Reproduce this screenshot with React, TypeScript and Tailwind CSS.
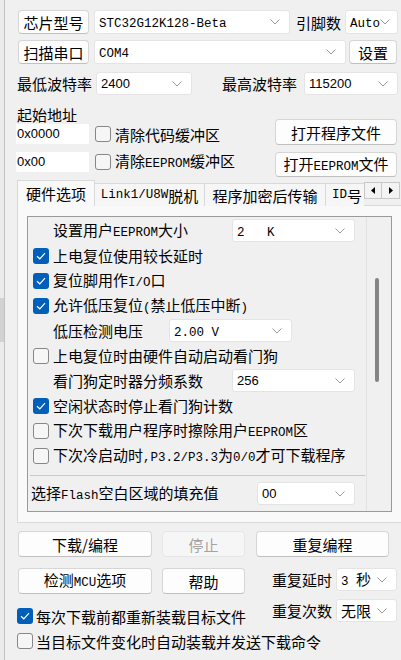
import React from 'react';

const Mix = ({ s }: { s: string }) => (
  <>
    {s.split(/([ -~]+)/).map((p, i) =>
      i % 2 === 1 ? (
        <span key={i} className="font-['Liberation_Mono',monospace] text-[12.5px] whitespace-pre">
          {p}
        </span>
      ) : (
        p
      )
    )}
  </>
);

const Chevron = () => (
  <svg width="10" height="6" viewBox="0 0 10 6" className="shrink-0">
    <path d="M0.5 0.5L5 5L9.5 0.5" fill="none" stroke="#9a9a9a" strokeWidth="1" />
  </svg>
);

const Combo = ({ value, className = '', sans = false }: { value: string; className?: string; sans?: boolean }) => (
  <div
    className={`flex items-center justify-between bg-white border border-[#e4e4e4] rounded-[3px] pl-[4px] pr-[9px] shrink-0 whitespace-nowrap ${className}`}
  >
    {sans ? (
      <span className="font-['Liberation_Sans',sans-serif] text-[13px] leading-none">{value}</span>
    ) : (
      <span className="leading-none whitespace-pre">
        <Mix s={value} />
      </span>
    )}
    <Chevron />
  </div>
);

const Btn = ({ children, className = '', disabled = false }: { children: React.ReactNode; className?: string; disabled?: boolean }) => (
  <div
    className={`flex items-center justify-center rounded-[4px] border shrink-0 leading-none whitespace-nowrap ${
      disabled
        ? 'bg-[#f6f6f6] border-[#e6e6e6] text-[#a3a3a3]'
        : 'bg-[#fdfdfd] border-[#d6d6d6] border-b-[#c0c0c0] text-black'
    } ${className}`}
  >
    {children}
  </div>
);

const Check = ({ checked }: { checked: boolean }) =>
  checked ? (
    <div className="w-4 h-4 rounded-[3px] bg-[#005fb8] flex items-center justify-center shrink-0">
      <svg width="10" height="8" viewBox="0 0 10 8">
        <path d="M1 4.2L3.8 6.8L9 1.2" fill="none" stroke="white" strokeWidth="1.2" />
      </svg>
    </div>
  ) : (
    <div className="w-4 h-4 rounded-[3px] border border-[#878787] bg-[#f6f6f6] shrink-0" />
  );

const CheckRow = ({ checked, text }: { checked: boolean; text: string }) => (
  <div className="flex items-center h-[25px] pl-[5px]">
    <Check checked={checked} />
    <span className="ml-[4px] leading-none whitespace-nowrap">
      <Mix s={text} />
    </span>
  </div>
);

export default function App() {
  return (
    <div className="w-[401px] h-[660px] bg-[#f0f0f0] flex overflow-hidden font-['Noto_Sans_CJK_SC','Noto_Sans',sans-serif] text-[15px] text-black">
      <div className="w-[4px] bg-[#ebebeb] flex flex-col">
        <div className="mt-[298px] h-[44px] bg-[#d2d2d2]" />
      </div>
      <div className="w-px bg-[#c2c2c2]" />
      <div className="flex-1 flex flex-col pl-[12px]">
        {/* row 1 */}
        <div className="flex items-center mt-[10px] h-6">
          <Btn className="ml-px w-[71px] h-6">芯片型号</Btn>
          <Combo value="STC32G12K128-Beta" className="ml-[5px] w-[196px] h-6" />
          <span className="ml-[6px] w-[44px] leading-none whitespace-nowrap">引脚数</span>
          <Combo value="Auto" className="ml-[5px] w-[53px] h-6 pl-[3px] pr-[4px]" />
        </div>
        {/* row 2 */}
        <div className="flex items-center mt-[6px] h-6">
          <Btn className="ml-px w-[71px] h-6">扫描串口</Btn>
          <Combo value="COM4" className="ml-[5px] w-[252px] h-6" />
          <Btn className="ml-[3px] w-[48px] h-6">设置</Btn>
        </div>
        {/* row 3 */}
        <div className="flex items-center mt-[8px] h-[23px]">
          <span className="w-[79px] leading-none whitespace-nowrap">最低波特率</span>
          <Combo value="2400" sans className="w-[96px] h-[23px]" />
          <span className="ml-[30px] w-[82px] leading-none whitespace-nowrap">最高波特率</span>
          <Combo value="115200" sans className="w-[94px] h-[23px]" />
        </div>
        {/* address + file buttons */}
        <div className="flex">
          <div className="flex flex-col mt-[11px]">
            <div className="h-[18px] leading-[18px]">起始地址</div>
            <div className="flex items-center h-[20px]">
              <div className="-ml-px w-[73px] h-[20px] bg-white flex items-center pl-px font-['Liberation_Sans',sans-serif] text-[13px]">
                0x0000
              </div>
              <div className="ml-[6px]">
                <Check checked={false} />
              </div>
              <span className="ml-[4px] leading-none whitespace-nowrap">清除代码缓冲区</span>
            </div>
            <div className="flex items-center h-[20px] mt-[8px]">
              <div className="-ml-px w-[73px] h-[20px] bg-white flex items-center pl-px font-['Liberation_Sans',sans-serif] text-[13px]">
                0x00
              </div>
              <div className="ml-[6px]">
                <Check checked={false} />
              </div>
              <span className="ml-[4px] leading-none whitespace-nowrap">
                <Mix s="清除EEPROM缓冲区" />
              </span>
            </div>
          </div>
          <div className="ml-auto mr-[4px] flex flex-col mt-[24px] gap-[7px]">
            <Btn className="w-[122px] h-[26px]">打开程序文件</Btn>
            <Btn className="w-[122px] h-[25px]">
              <span>
                打开<Mix s="EEPROM" />文件
              </span>
            </Btn>
          </div>
        </div>
        {/* tabs */}
        <div className="flex items-end mt-[3px] h-[26px] relative z-10 whitespace-nowrap">
          <div className="w-[78px] h-[26px] border border-b-0 border-[#d9d9d9] bg-[#f9f9f9] flex items-center justify-center leading-none">
            硬件选项
          </div>
          <div className="w-[110px] h-[23px] border-t border-r border-[#d9d9d9] bg-[#f6f6f6] flex items-center justify-center leading-none">
            <Mix s="Link1/U8W脱机" />
          </div>
          <div className="w-[121px] h-[23px] border-t border-r border-[#d9d9d9] bg-[#f6f6f6] flex items-center justify-center leading-none">
            程序加密后传输
          </div>
          <div className="w-[38px] h-[23px] border-t border-[#d9d9d9] bg-[#f6f6f6] flex items-center pl-[6px] leading-none overflow-hidden">
            <Mix s="ID号" />
          </div>
          <div className="self-start mt-[2px] flex">
            <div className="w-[18px] h-[17px] border border-[#c8c8c8] bg-[#f3f3f3] flex items-center justify-center">
              <svg width="4" height="7" viewBox="0 0 4 7">
                <path d="M4 0L0 3.5L4 7Z" fill="#000" />
              </svg>
            </div>
            <div className="w-[18px] h-[17px] border border-l-0 border-[#c8c8c8] bg-[#f3f3f3] flex items-center justify-center">
              <svg width="4" height="7" viewBox="0 0 4 7">
                <path d="M0 0L4 3.5L0 7Z" fill="#000" />
              </svg>
            </div>
          </div>
        </div>
        {/* tab panel */}
        <div className="-mt-px h-[318px] border-t border-l border-b border-[#d9d9d9] bg-[#f9f9f9] -mr-px pt-[10px] pl-[9px]">
          <div className="w-[365px] h-[296px] border border-[#9a9a9a] bg-[#f0f0f0] flex">
            <div className="w-[338px] flex flex-col pt-px">
              <div className="flex items-center h-[25px] pl-[25px]">
                <span className="w-[179px] leading-none whitespace-nowrap">
                  <Mix s="设置用户EEPROM大小" />
                </span>
                <Combo value="2   K" className="w-[123px] h-[23px]" />
              </div>
              <CheckRow checked text="上电复位使用较长延时" />
              <CheckRow checked text="复位脚用作I/O口" />
              <CheckRow checked text="允许低压复位(禁止低压中断)" />
              <div className="flex items-center h-[25px] pl-[25px]">
                <span className="w-[116px] leading-none whitespace-nowrap">低压检测电压</span>
                <Combo value="2.00 V" className="w-[123px] h-[23px]" />
              </div>
              <CheckRow checked={false} text="上电复位时由硬件自动启动看门狗" />
              <div className="flex items-center h-[25px] pl-[25px]">
                <span className="w-[179px] leading-none whitespace-nowrap">看门狗定时器分频系数</span>
                <Combo value="256" sans className="w-[123px] h-[23px]" />
              </div>
              <CheckRow checked text="空闲状态时停止看门狗计数" />
              <CheckRow checked={false} text="下次下载用户程序时擦除用户EEPROM区" />
              <CheckRow checked={false} text="下次冷启动时,P3.2/P3.3为0/0才可下载程序" />
              <div className="mt-[7px] ml-[2px] w-[335px] h-px bg-[#c8c8c8]" />
              <div className="flex items-center mt-[6px] h-[23px] pl-[3px]">
                <span className="w-[226px] leading-none whitespace-nowrap">
                  <Mix s="选择Flash空白区域的填充值" />
                </span>
                <Combo value="00" sans className="w-[98px] h-[23px]" />
              </div>
            </div>
            <div className="w-px bg-[#e2e2e2]" />
            <div className="flex-1">
              <div className="ml-[8px] mt-[61px] w-[4px] h-[104px] rounded-full bg-[#858585]" />
            </div>
          </div>
        </div>
        {/* bottom buttons */}
        <div className="flex items-center mt-[8px] h-[26px]">
          <Btn className="ml-px w-[134px] h-[26px]">下载/编程</Btn>
          <Btn disabled className="ml-[10px] w-[83px] h-[26px]">
            停止
          </Btn>
          <Btn className="ml-[11px] w-[133px] h-[26px]">重复编程</Btn>
        </div>
        <div className="flex items-start mt-[11px] h-[26px]">
          <Btn className="ml-px w-[134px] h-[26px]">
            <span>
              检测<Mix s="MCU" />选项
            </span>
          </Btn>
          <Btn className="ml-[10px] w-[83px] h-[26px]">帮助</Btn>
          <span className="ml-[27px] w-[64px] h-[23px] flex items-center leading-none whitespace-nowrap">重复延时</span>
          <Combo value="3 秒" className="w-[61px] h-[23px] pr-[7px]" />
        </div>
        <div className="flex items-start mt-[5px] h-[25px]">
          <div className="w-[255px] flex items-center mt-[9px]">
            <Check checked />
            <span className="ml-[3px] leading-none whitespace-nowrap">每次下载前都重新装载目标文件</span>
          </div>
          <span className="w-[64px] h-[23px] flex items-center leading-none whitespace-nowrap">重复次数</span>
          <Combo value="无限" className="w-[61px] h-[23px] pr-[7px]" />
        </div>
        <div className="flex items-center mt-[9px]">
          <Check checked={false} />
          <span className="ml-[3px] leading-none whitespace-nowrap">当目标文件变化时自动装载并发送下载命令</span>
        </div>
      </div>
    </div>
  );
}
